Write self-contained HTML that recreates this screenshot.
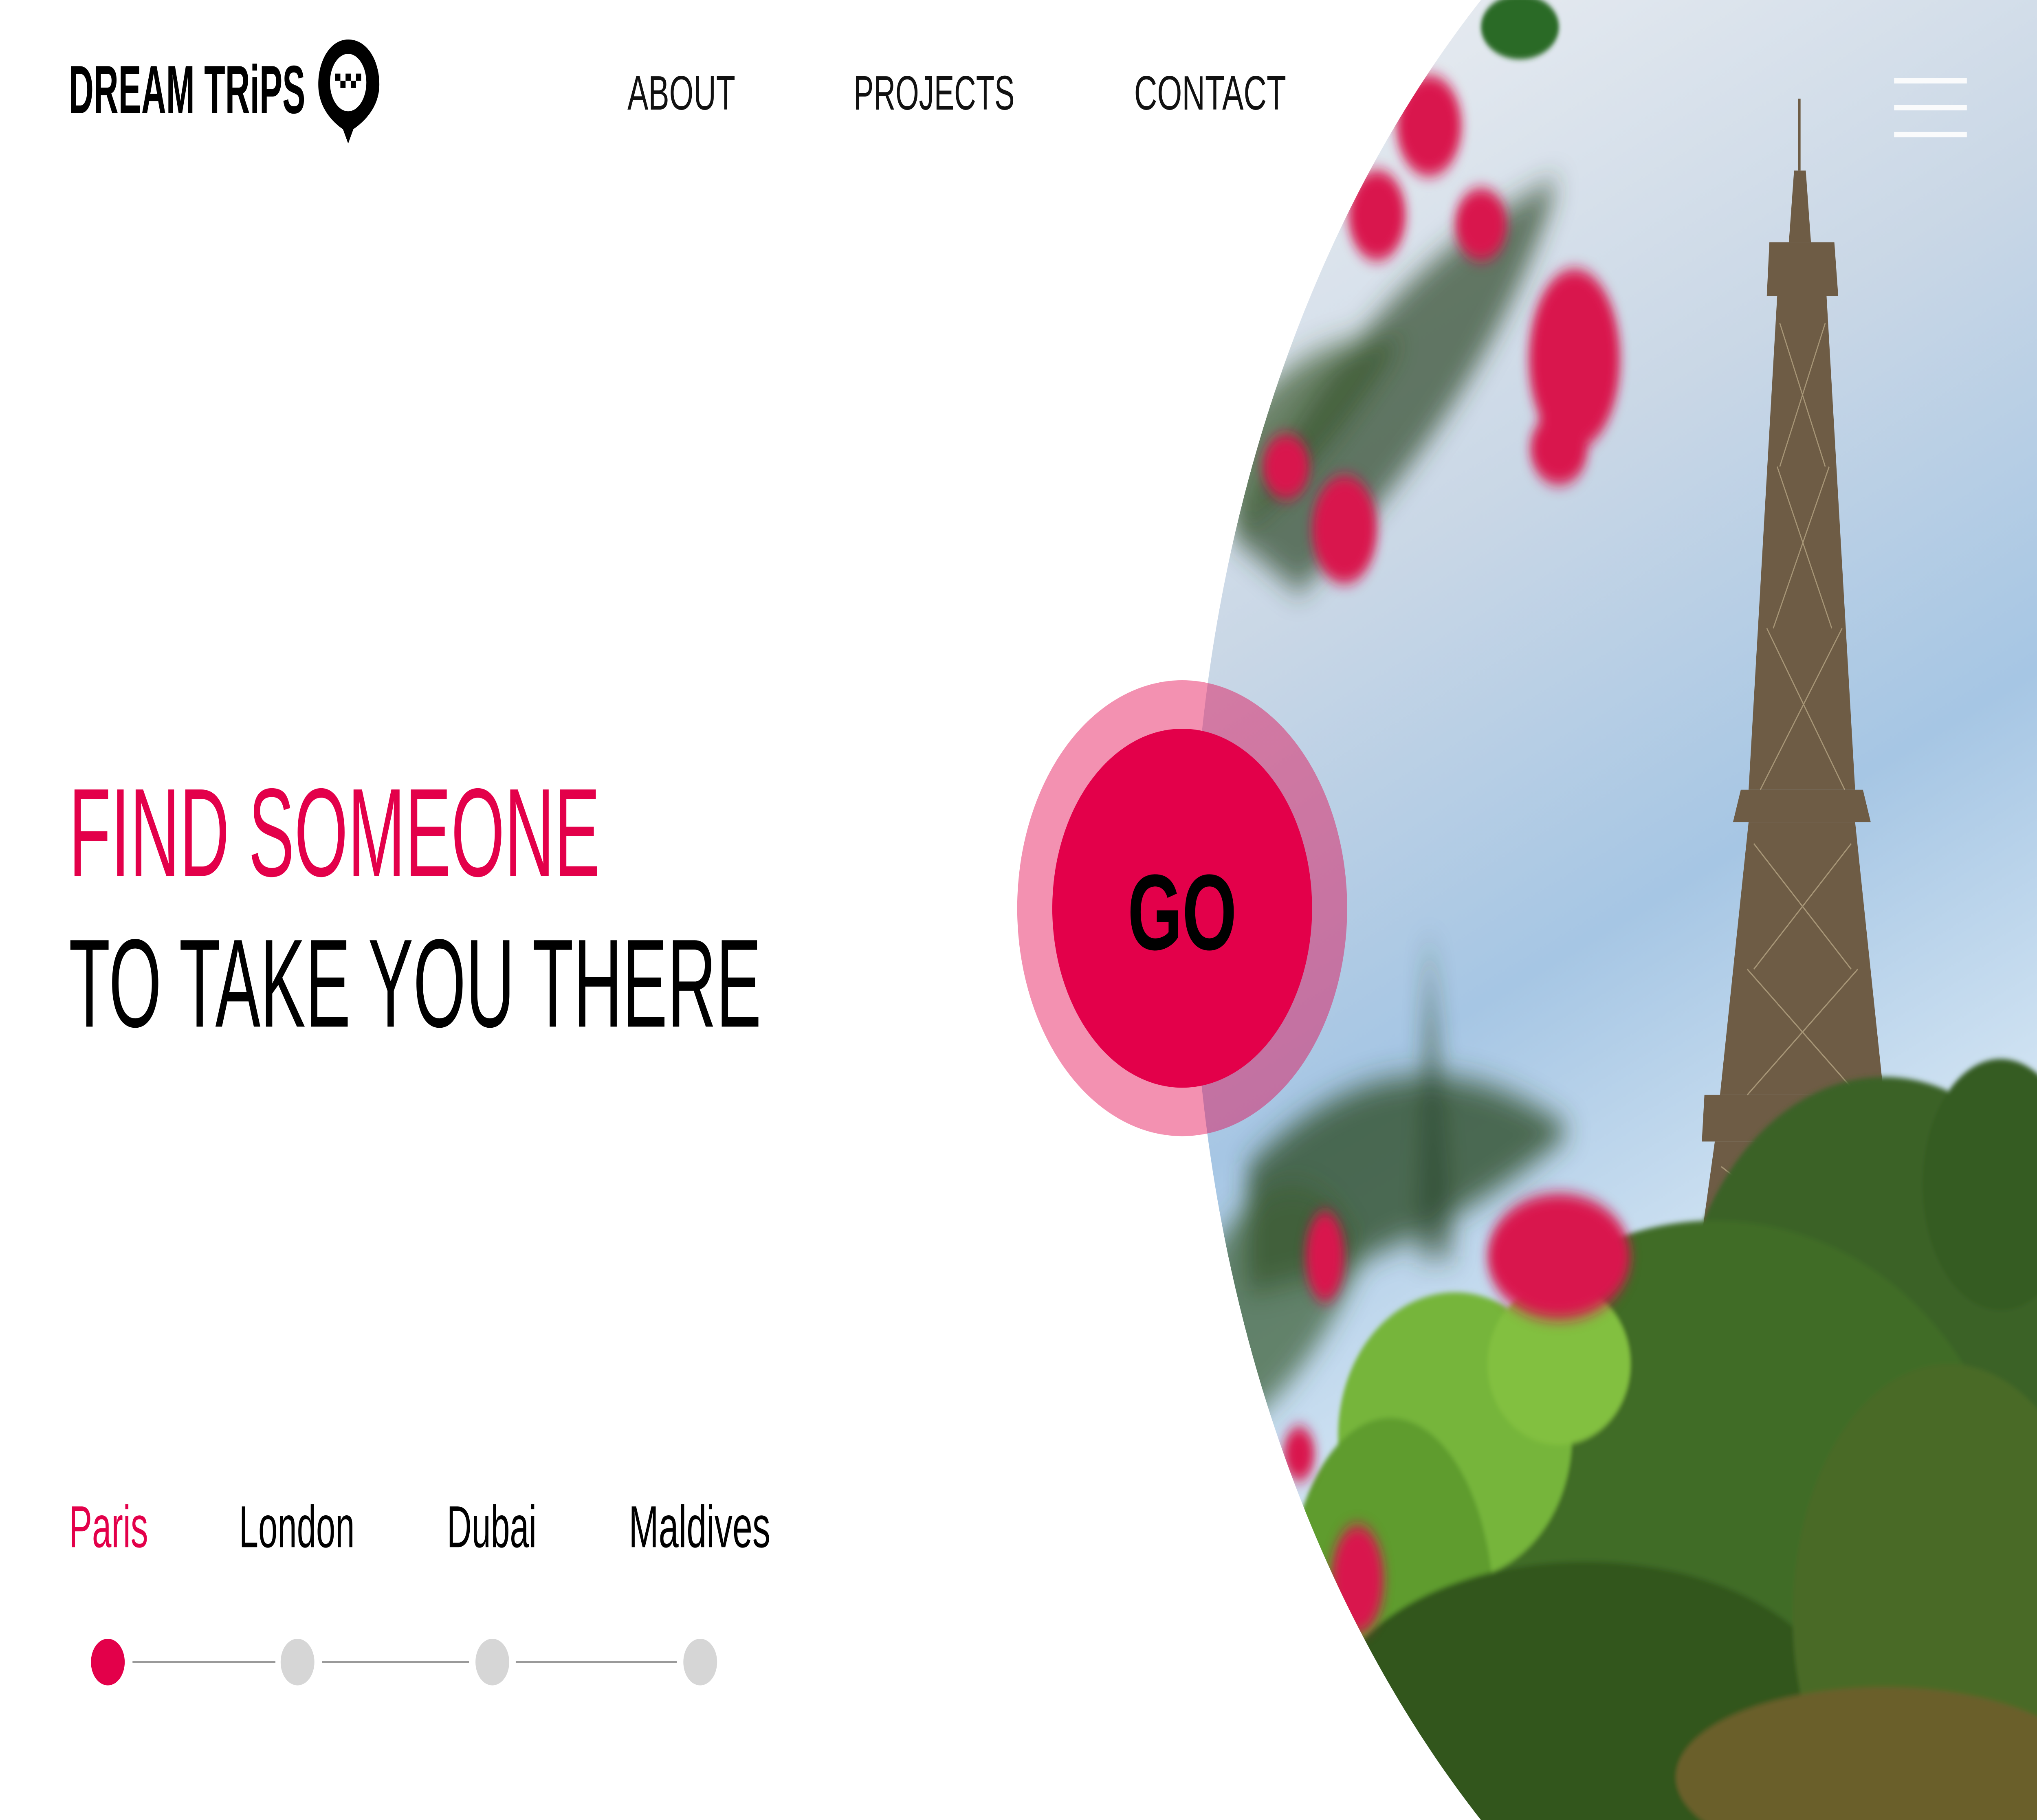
<!DOCTYPE html>
<html><head><meta charset="utf-8">
<style>
html,body{margin:0;padding:0;background:#fff;overflow:hidden;width:100vw;height:100vh}
svg{display:block;width:100vw;height:100vh}
</style></head>
<body>
<svg viewBox="0 0 1568 1014" preserveAspectRatio="none" xmlns="http://www.w3.org/2000/svg">
<defs>
  <clipPath id="c"><circle cx="1608" cy="507" r="690"/></clipPath>
  <linearGradient id="sky" x1="0" y1="0" x2="0.3" y2="1">
    <stop offset="0" stop-color="#eef0f3"/>
    <stop offset="0.35" stop-color="#c9d7e6"/>
    <stop offset="0.6" stop-color="#a6c6e4"/>
    <stop offset="0.8" stop-color="#cfe2f2"/>
    <stop offset="1" stop-color="#b8d4ea"/>
  </linearGradient>
  <filter id="b8"><feGaussianBlur stdDeviation="8"/></filter>
  <filter id="b4"><feGaussianBlur stdDeviation="4"/></filter>
  <filter id="b2"><feGaussianBlur stdDeviation="1.5"/></filter>
</defs>

<rect width="1568" height="1014" fill="#fff"/>

<g clip-path="url(#c)">
  <rect x="900" y="0" width="700" height="1014" fill="url(#sky)"/>
  <g fill="#6e5c45">
    <rect x="1384" y="55" width="2" height="40"/>
    <polygon points="1381,95 1390,95 1394,135 1377,135"/>
    <polygon points="1362,135 1412,135 1415,165 1360,165"/>
    <polygon points="1368,165 1406,165 1428,440 1346,440"/>
    <polygon points="1340,440 1434,440 1440,458 1334,458"/>
    <polygon points="1346,458 1428,458 1450,610 1324,610"/>
    <polygon points="1312,610 1460,610 1462,636 1310,636"/>
    <polygon points="1320,636 1454,636 1468,730 1302,730"/>
  </g>
  <g stroke="#b6a584" stroke-width="0.8" opacity="0.8">
    <path d="M1370 180 L1405 260 M1405 180 L1370 260 M1368 260 L1410 350 M1408 260 L1365 350 M1360 350 L1420 440 M1418 350 L1355 440 M1350 470 L1425 540 M1425 470 L1350 540 M1345 540 L1430 610 M1430 540 L1345 610 M1325 650 L1450 720 M1450 650 L1325 720"/>
  </g>
  <g filter="url(#b2)">
    <ellipse cx="1450" cy="760" rx="160" ry="160" fill="#3a6226"/>
    <ellipse cx="1320" cy="860" rx="230" ry="180" fill="#3f6c28"/>
    <ellipse cx="1120" cy="800" rx="90" ry="80" fill="#76b53a"/>
    <ellipse cx="1070" cy="900" rx="80" ry="110" fill="#5f9c2e"/>
    <ellipse cx="1220" cy="960" rx="200" ry="90" fill="#30561e"/>
    <ellipse cx="1500" cy="900" rx="120" ry="140" fill="#4a6a28"/>
    <ellipse cx="1540" cy="660" rx="60" ry="70" fill="#355c22"/>
    <ellipse cx="1200" cy="760" rx="55" ry="45" fill="#82c040"/>
    <ellipse cx="1450" cy="990" rx="160" ry="50" fill="#6a5e2a"/>
  </g>
  <g filter="url(#b8)">
    <path d="M950 300 Q1050 150 1200 100 Q1150 220 1000 330 Z" fill="#2f4a2a" opacity="0.7"/>
    <path d="M940 250 Q1000 180 1080 190 Q1020 260 950 300 Z" fill="#3a5a30" opacity="0.7"/>
    <path d="M960 650 Q1080 560 1210 630 Q1100 700 960 720 Z" fill="#2e4f2c" opacity="0.8"/>
    <path d="M930 700 Q1000 620 1050 700 Q1000 780 940 800 Z" fill="#3d5e32" opacity="0.7"/>
    <path d="M1100 520 L1120 700 L1090 700 Z" fill="#2e4a2a" opacity="0.6"/>
  </g>
  <g filter="url(#b4)" fill="#d9124e">
    <ellipse cx="1100" cy="70" rx="25" ry="28"/>
    <ellipse cx="1060" cy="120" rx="22" ry="25"/>
    <ellipse cx="1140" cy="125" rx="20" ry="20"/>
    <ellipse cx="1212" cy="200" rx="35" ry="50"/>
    <ellipse cx="1200" cy="250" rx="22" ry="20"/>
    <ellipse cx="1035" cy="295" rx="25" ry="30"/>
    <ellipse cx="990" cy="260" rx="18" ry="18"/>
    <ellipse cx="1200" cy="700" rx="55" ry="35"/>
    <ellipse cx="1020" cy="700" rx="15" ry="25"/>
    <ellipse cx="1045" cy="880" rx="20" ry="30"/>
    <ellipse cx="1000" cy="810" rx="12" ry="15"/>
  </g>
  <g filter="url(#b2)" fill="#2a6a28">
    <ellipse cx="1170" cy="15" rx="30" ry="18"/>
  </g>
  <g stroke="#fff" stroke-width="3" opacity="0.9">
    <line x1="1458" y1="45" x2="1514" y2="45"/>
    <line x1="1458" y1="60" x2="1514" y2="60"/>
    <line x1="1458" y1="75" x2="1514" y2="75"/>
  </g>
</g>

<text x="53" y="63" font-family="Liberation Sans, sans-serif" font-weight="700" font-size="38" textLength="182" lengthAdjust="spacingAndGlyphs" fill="#000">DREAM TRiPS</text>
<path d="M268 22 C283 22 292 34 292 47 C292 60 280 68 272 72 L268 80 L264 72 C256 68 245 60 245 47 C245 34 254 22 268 22 Z" fill="#000"/>
<ellipse cx="268" cy="46" rx="14" ry="16" fill="#fff"/>
<g fill="#000">
  <rect x="258" y="41" width="4" height="4"/><rect x="266" y="41" width="4" height="4"/><rect x="274" y="41" width="4" height="4"/>
  <rect x="262" y="45" width="4" height="4"/><rect x="270" y="45" width="4" height="4"/>
</g>

<g font-family="Liberation Sans, sans-serif" font-size="27" fill="#111">
  <text x="483" y="61" textLength="83" lengthAdjust="spacingAndGlyphs">ABOUT</text>
  <text x="657" y="61" textLength="124" lengthAdjust="spacingAndGlyphs">PROJECTS</text>
  <text x="873" y="61" textLength="117" lengthAdjust="spacingAndGlyphs">CONTACT</text>
</g>

<text x="53" y="488" font-family="Liberation Sans, sans-serif" font-size="70" fill="#e3004a" textLength="409" lengthAdjust="spacingAndGlyphs">FIND SOMEONE</text>
<text x="53" y="572" font-family="Liberation Sans, sans-serif" font-size="70" fill="#000" textLength="533" lengthAdjust="spacingAndGlyphs">TO TAKE YOU THERE</text>

<circle cx="910" cy="506" r="127" fill="#e3004a" fill-opacity="0.43"/>
<circle cx="910" cy="506" r="100" fill="#e3004a"/>
<text x="868" y="529" font-family="Liberation Sans, sans-serif" font-weight="700" font-size="60" textLength="84" lengthAdjust="spacingAndGlyphs" fill="#000">GO</text>

<g font-family="Liberation Sans, sans-serif" font-size="33">
  <text x="53" y="862" fill="#e3004a" textLength="61" lengthAdjust="spacingAndGlyphs">Paris</text>
  <text x="184" y="862" fill="#000" textLength="89" lengthAdjust="spacingAndGlyphs">London</text>
  <text x="344" y="862" fill="#000" textLength="69" lengthAdjust="spacingAndGlyphs">Dubai</text>
  <text x="484" y="862" fill="#000" textLength="109" lengthAdjust="spacingAndGlyphs">Maldives</text>
</g>
<g stroke="#9a9a9a" stroke-width="1.2">
  <line x1="102" y1="926" x2="212" y2="926"/>
  <line x1="248" y1="926" x2="361" y2="926"/>
  <line x1="397" y1="926" x2="521" y2="926"/>
</g>
<circle cx="83" cy="926" r="13" fill="#e3004a"/>
<circle cx="229" cy="926" r="13" fill="#d6d6d6"/>
<circle cx="379" cy="926" r="13" fill="#d6d6d6"/>
<circle cx="539" cy="926" r="13" fill="#d6d6d6"/>
</svg>
</body></html>
